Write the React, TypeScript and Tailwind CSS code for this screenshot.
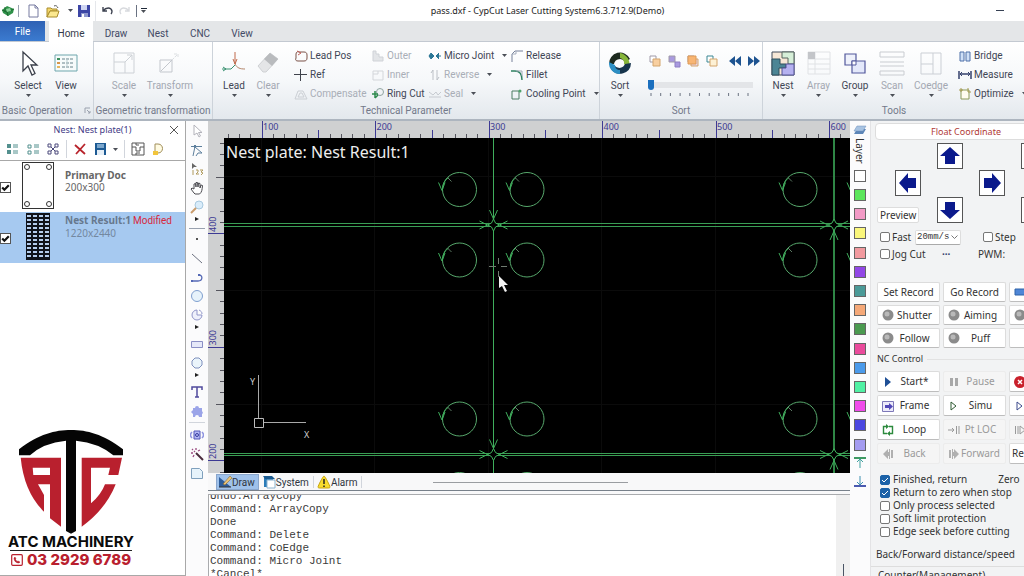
import { useState } from 'react';
import type { ReactNode } from 'react';

const GREEN = '#3fae5c';

function Caret({ className = '' }: { className?: string }) {
  return (
    <svg width="5" height="3" viewBox="0 0 5 3" className={`shrink-0 ${className}`}>
      <path d="M0 0h5L2.5 3z" fill="#4b4f57" />
    </svg>
  );
}

function Icon({ size = 14, children }: { size?: number; children: ReactNode }) {
  return (
    <svg width={size} height={size} viewBox={`0 0 ${size} ${size}`} fill="none" className="shrink-0">
      {children}
    </svg>
  );
}

/* ---------- title bar ---------- */

function TitleBar() {
  return (
    <header className="flex h-[21px] shrink-0 items-center bg-white">
      <div className="flex w-[150px] shrink-0 items-center pl-px">
        <Icon size={14}>
          <path d="M1 6 L6 2 L13 5 L12 9 L7 12 L2 9z" fill="#2f9149" />
          <path d="M1 6l5 2 1 4M6 8l7-3M4 3v5" stroke="#1c6a31" />
          <path d="M5 5l4-1 1 3-4 1z" fill="#8bd29b" />
        </Icon>
        <span className="mx-[3px] h-3 w-px bg-gray-400" />
        <button aria-label="New" className="mr-1.5 ml-1">
          <Icon size={14}>
            <path d="M3 1h6l3 3v9H3z" fill="#fff" stroke="#777aa0" />
            <path d="M9 1v3h3" stroke="#777aa0" />
          </Icon>
        </button>
        <button aria-label="Open" className="flex items-center gap-2">
          <Icon size={14}>
            <path d="M1 4h4l1 1h5v2H4l-3 6z" fill="#f3d66b" stroke="#a98c2c" />
            <path d="M4 7h9l-2 6H1z" fill="#fbe88f" stroke="#a98c2c" />
            <path d="M8 2c2-1 3 0 4 2" stroke="#555" />
          </Icon>
          <Caret />
        </button>
        <button aria-label="Save" className="ml-1">
          <Icon size={14}>
            <path d="M1 1h12v12H1z" fill="#3c45a5" />
            <path d="M4 1h6v5H4z" fill="#cfd5f2" />
            <path d="M4 9h7v4H4z" fill="#8f98cf" />
            <path d="M5 10h2v3H5z" fill="#fff" />
          </Icon>
        </button>
        <span className="mx-1 h-5 w-px bg-gray-200" />
        <button aria-label="Undo">
          <Icon size={14}>
            <path d="M3 3v4h4M3 7c3-4 8-4 9 0 0 1 0 2-1 3" stroke="#3d4250" strokeWidth="1.4" />
          </Icon>
        </button>
        <button aria-label="Redo" className="ml-1">
          <Icon size={14}>
            <path d="M11 3v4H7M11 7c-3-4-8-4-9 0 0 1 0 2 1 3" stroke="#d8dade" strokeWidth="1.4" />
          </Icon>
        </button>
        <span className="ml-1 h-3 w-px bg-gray-500" />
        <button aria-label="Customize" className="ml-1 w-1.5 border-t border-gray-800 pt-px">
          <Caret />
        </button>
      </div>
      <h1 className="flex-1 text-center text-[9px] text-[#222]">pass.dxf - CypCut Laser Cutting System6.3.712.9(Demo)</h1>
      <div className="flex w-[79px] shrink-0 justify-end pr-5">
        <button aria-label="Minimize" className="flex h-4 items-center">
          <span className="h-px w-2 bg-gray-700" />
        </button>
      </div>
    </header>
  );
}

/* ---------- ribbon ---------- */

const tabs = ['Home', 'Draw', 'Nest', 'CNC', 'View'];

function RibbonTabs() {
  const [active, setActive] = useState('Home');
  return (
    <nav className="flex h-[21px] shrink-0 items-stretch border-b border-[#c3c9d1] bg-[#e4e6e8] font-[Roboto] text-[10px]">
      <button className="mr-1 w-[45px] bg-gradient-to-b from-[#2f62b4] to-[#3b7bd0] text-white">File</button>
      {tabs.map((tab) => (
        <button
          key={tab}
          onClick={() => setActive(tab)}
          className={`pt-1 ${tab === active ? 'mr-0.5 -mb-px w-11 bg-white text-[#333a4a]' : 'w-[42px] text-[#434a66]'}`}
        >
          {tab}
        </button>
      ))}
    </nav>
  );
}

function Group({ label, className, launcher, children }: { label: string; className: string; launcher?: boolean; children: ReactNode }) {
  return (
    <section className={`flex shrink-0 flex-col border-r border-[#cdd3da] ${className}`}>
      <div className="flex flex-1 pt-1">{children}</div>
      <div className="flex h-4 items-center justify-center gap-3 pb-px whitespace-nowrap text-[#73798a]">
        {label}
        {launcher && (
          <Icon size={7}>
            <path d="M1 6V1h5M3 3l3 3M6 4v2H4" stroke="#9aa1ae" />
          </Icon>
        )}
      </div>
    </section>
  );
}

function BigButton({ label, className, disabled, children }: { label: string; className: string; disabled?: boolean; children: ReactNode }) {
  return (
    <button disabled={disabled} className={`flex shrink-0 flex-col items-center pt-1 ${disabled ? 'text-[#a3a8b2]' : 'text-[#3f4655]'} ${className}`}>
      <Icon size={26}>{children}</Icon>
      <span className="mt-1 leading-3">{label}</span>
      <Caret className="mt-0.5" />
    </button>
  );
}

function SmallButton({ label, disabled, caret, children }: { label: string; disabled?: boolean; caret?: boolean; children: ReactNode }) {
  return (
    <button disabled={disabled} className={`flex h-[19px] items-center gap-0.5 whitespace-nowrap ${disabled ? 'text-[#a9aeb7]' : 'text-[#3f4655]'}`}>
      <Icon size={14}>{children}</Icon>
      {label}
      {caret && <Caret className="ml-1.5" />}
    </button>
  );
}

const sortIcons = [
  ['#fff', '#f8cfa0'],
  ['#a99adf', '#a99adf'],
  ['#f8b573', '#e8d5e8'],
  ['#fff', '#fdf1d5'],
];

function Ribbon() {
  return (
    <div className="flex h-[79px] shrink-0 overflow-hidden border-b-2 border-[#adb5bf] bg-gradient-to-b from-white via-[#f6f8fa] to-[#e3e8ed] font-[Roboto] text-[10px]">
      <Group label="Basic Operation" className="w-[94px]" launcher>
        <BigButton label="Select" className="ml-2 w-10">
          <path d="M8 2v19l5-5 4 9 3-1.500-4-8.500h6z" fill="#fff" stroke="#3a3f4a" strokeWidth="1.300" />
        </BigButton>
        <BigButton label="View" className="w-9">
          <path d="M2 5h22v16H2z" fill="#f6fbfb" stroke="#6fa6ad" />
          <path d="M4 8h3v2H4z" fill="#3a8f5c" />
          <path d="M4 12h3v2H4z" fill="#d8964a" />
          <path d="M4 16h3v2H4z" fill="#e5b75f" />
          <path d="M9 9h12M9 13h12M9 17h12" stroke="#67828a" strokeDasharray="3 1" />
          <path d="M14 9v9" stroke="#b9cdd0" />
        </BigButton>
      </Group>
      <Group label="Geometric transformation" className="w-[119px]">
        <BigButton label="Scale" className="ml-2 w-11" disabled>
          <path d="M3 3h20v20H3z" stroke="#cdd1d6" />
          <path d="M3 12h11v11M14 12l7-7M16 5h5v5" stroke="#cdd1d6" />
        </BigButton>
        <BigButton label="Transform" className="w-12" disabled>
          <path d="M3 10h12v12H3z" stroke="#c3c7cd" />
          <path d="M4 21L15 10" stroke="#c3c7cd" />
          <path d="M15 10l5-5M17 4h4v4" stroke="#dcdfe2" strokeDasharray="3 1" />
        </BigButton>
      </Group>

      <Group label="Technical Parameter" className="w-[387px]">
        <BigButton label="Lead" className="ml-[3px] w-9">
          <path d="M14 2v12M12 9l2 5 2-5" stroke="#c0694a" />
          <path d="M1 19h9l4-4" stroke="#37906f" />
          <path d="M2 17l3 2-3 2" stroke="#37906f" />
          <path d="M14 14c2 4 5 5 10 5" stroke="#b38468" />
        </BigButton>
        <BigButton label="Clear" className="w-8" disabled>
          <path d="M3 16L15 3l8 6-12 13H8z" fill="#e4e5e7" stroke="#cfd1d4" />
          <path d="M9 9L15 3l8 6-6 7z" fill="#b9bbbe" />
        </BigButton>
        <div className="mt-1 mr-1.5 ml-1 h-12 w-px bg-[#d6dbe1]" />
        <div className="grid grid-flow-col grid-cols-[77px_57px_82px_90px] grid-rows-3 content-start">
          <SmallButton label="Lead Pos">
            <path d="M2 5c0-2 2-3 3-2h5c2 0 3 1 3 3v3c0 2-1 3-3 3H4c-2 0-3-1-2-3z" stroke="#7b5248" />
            <path d="M3 2l4 2-3 2" stroke="#c0605a" />
          </SmallButton>
          <SmallButton label="Ref">
            <path d="M6.500 1v12M0 6.500h13" stroke="#3f434c" />
          </SmallButton>
          <SmallButton label="Compensate" disabled>
            <path d="M1 12L4 4h5l4 8zM4 10l2-4h2l2 4z" stroke="#cbcfd4" />
          </SmallButton>
          <SmallButton label="Outer" disabled>
            <path d="M2 12V2h3v3h3v3h4v4z" fill="#e3e5e8" stroke="#cfd2d7" />
          </SmallButton>
          <SmallButton label="Inner" disabled>
            <path d="M2 3h10v9H2zM2 6h5V3" stroke="#d3d6da" />
          </SmallButton>
          <SmallButton label="Ring Cut">
            <circle cx="9" cy="5" r="3.500" stroke="#8fa4a0" />
            <path d="M1 7h6M4 4v7M4 11l3-3" stroke="#2d8a4c" strokeWidth="1.500" />
          </SmallButton>
          <SmallButton label="Micro Joint" caret>
            <path d="M1 7h5M8 7h5" stroke="#2c7796" />
            <path d="M3 4l3 3-3 3-2-3zM11 4L8 7l3 3" fill="#2c7796" stroke="#2c7796" />
          </SmallButton>
          <SmallButton label="Reverse" disabled caret>
            <path d="M5 12V2L3 5M9 2v10l2-3" stroke="#bcc0c6" />
          </SmallButton>
          <SmallButton label="Seal" disabled caret>
            <path d="M1 10h12M1 5l4 3 3-3M8 5l2 3 3-3" stroke="#c6cad0" />
          </SmallButton>
          <SmallButton label="Release">
            <path d="M2 13V5l3-3h8" stroke="#76819a" />
            <path d="M2 5h4V2" stroke="#a5adbd" />
          </SmallButton>
          <SmallButton label="Fillet">
            <path d="M1 3h4c5 0 7 3 7 9" stroke="#2e8060" strokeWidth="1.400" />
            <path d="M6 3h6v5" stroke="#a0a8b5" />
          </SmallButton>
          <SmallButton label="Cooling Point" caret>
            <path d="M2 4h7v8H2z" stroke="#4d7d62" />
            <circle cx="10" cy="4" r="1.500" fill="#4fa36a" />
          </SmallButton>
        </div>
      </Group>

      <Group label="Sort" className="w-[163px]">
        <BigButton label="Sort" className="ml-0.5 w-9">
          <path d="M2 14A11 11 0 0 1 23 9l-5 3a6 6 0 0 0-11 2z" fill="#1d2a1f" />
          <path d="M13 3a11 11 0 0 1 9 14l-5-3a5 5 0 0 0-4-6z" fill="#86b53a" />
          <path d="M24 13A11 11 0 0 1 4 19l4-3a6 6 0 0 0 10-2z" fill="#16344c" />
          <path d="M2 12l6 3c0 3 2 5 5 5v4A11 11 0 0 1 2 12z" fill="#2c8fc4" />
        </BigButton>
        <div className="ml-2.5 flex flex-col">
          <div className="flex h-[22px] items-end gap-[5px]">
            {sortIcons.map(([back, front], i) => (
              <button key={i} aria-label={`Sort order ${i + 1}`}>
                <Icon size={14}>
                  <path d="M2 2h6v6H2z" fill={back} stroke={i === 3 ? '#3b8793' : '#a09aa8'} />
                  <path d={i === 1 ? 'M8 8h5v5H8z' : 'M5 5h7v7H5z'} fill={front} stroke={i === 1 ? '#8d7fc4' : '#d3a56d'} />
                  {i === 2 && <path d="M2 2h8v8H2z" fill="#f8b573" stroke="#dd9b58" />}
                </Icon>
              </button>
            ))}
            <button aria-label="Previous" className="ml-1">
              <Icon size={14}>
                <path d="M7 2v10L1 7zM13 2v10L7 7z" fill="#1d5390" />
              </Icon>
            </button>
            <button aria-label="Next">
              <Icon size={14}>
                <path d="M1 2v10l6-5zM7 2v10l6-5z" fill="#1d5390" />
              </Icon>
            </button>
          </div>
          <input
            type="range"
            aria-label="Sort position"
            min={0}
            max={10}
            defaultValue={0}
            className="mt-3 h-[10px] w-[105px] appearance-none bg-[linear-gradient(#e3e5e8,#e3e5e8)] bg-[length:100%_6px] bg-center bg-no-repeat [&::-webkit-slider-thumb]:h-[10px] [&::-webkit-slider-thumb]:w-[6px] [&::-webkit-slider-thumb]:appearance-none [&::-webkit-slider-thumb]:rounded-b-sm [&::-webkit-slider-thumb]:bg-[#1b6fbe]"
          />
          <svg width="105" height="6" className="mt-0.5">
            {Array.from({ length: 11 }, (_, i) => (
              <path key={i} d={`M${3 + i * 9.7} 1v3`} stroke="#6b7280" />
            ))}
          </svg>
        </div>
      </Group>

      <Group label="Tools" className="min-w-[262px] flex-1 border-r-0">
        <BigButton label="Nest" className="ml-0.5 w-9">
          <path d="M2 2h22v23H2z" fill="#f6e7d6" stroke="#3f4a5a" />
          <path d="M12 2h12v12h-6V8h-6z" fill="#d6efd8" stroke="#56645f" />
          <path d="M2 9h8v5h6v4H9v7H2z" fill="#4b8595" stroke="#2f4f5c" />
          <path d="M16 14h8v11H12v-7h4z" fill="#b5b1f0" stroke="#535296" />
        </BigButton>
        <BigButton label="Array" className="w-[35px]" disabled>
          <path d="M2 2h22v22H2zM2 9h22M2 14h22M2 19h22M9 2v22" stroke="#e0e2e5" />
          <path d="M2 2h7v7H2z" fill="#c3c5c9" />
        </BigButton>
        <BigButton label="Group" className="w-[38px]">
          <path d="M3 4h11v11H3z" fill="#eef1fb" stroke="#52589c" strokeWidth="1.200" />
          <path d="M10 11h13v12H10z" fill="#e3e8fa" stroke="#52589c" strokeWidth="1.200" />
          <path d="M10 11h4v4h-4z" fill="#fff" stroke="#52589c" />
        </BigButton>
        <BigButton label="Scan" className="w-9" disabled>
          <path d="M1 2h24v5H1zM1 12h24M1 16h24M1 21h24v4H1z" stroke="#c9ccd1" />
        </BigButton>
        <BigButton label="Coedge" className="w-[42px]" disabled>
          <path d="M3 3h20v21H3zM3 14h12M15 3v21" stroke="#cbcfd5" />
        </BigButton>
        <div className="ml-1.5 flex flex-col">
          <SmallButton label="Bridge">
            <path d="M2 3h4v9H2zM8 3h4v9H8z" fill="#cfe0f7" stroke="#4e70a8" />
          </SmallButton>
          <SmallButton label="Measure">
            <path d="M1 3v8M13 3v8M2 6h10" stroke="#35406c" strokeWidth="1.500" />
            <path d="M4 4L2 6l2 2M10 4l2 2-2 2" stroke="#35406c" />
          </SmallButton>
          <SmallButton label="Optimize" caret>
            <path d="M3 3h8v9H3z" stroke="#8b9a5a" fill="#fffdf0" />
            <path d="M10 1v4h3M2 2h2v2H2z" stroke="#a49a4e" />
          </SmallButton>
        </div>
      </Group>
    </div>
  );
}

/* ---------- nest panel ---------- */

function PlateThumb() {
  return (
    <svg width="34" height="50" className="shrink-0">
      <rect x="1.500" y="1.500" width="31" height="46" fill="#fff" stroke="#333" />
      {[[6, 6], [28, 6], [6, 43], [28, 43]].map(([x, y]) => (
        <circle key={`${x}-${y}`} cx={x} cy={y} r="2.500" fill="none" stroke="#333" />
      ))}
    </svg>
  );
}

function NestThumb() {
  return (
    <svg width="34" height="50" className="shrink-0">
      <rect x="5" y="1" width="24" height="47" fill="#10131a" />
      {Array.from({ length: 11 }, (_, row) =>
        [6, 12, 18, 24].map((x) => <rect key={`${row}-${x}`} x={x} y={3 + row * 4} width="4" height="2" fill="#b5cdec" />),
      )}
    </svg>
  );
}

function NestRow({ id, name, size, selected, modified, thumb }: { id: string; name: string; size: string; selected?: boolean; modified?: boolean; thumb: ReactNode }) {
  return (
    <li className={`flex h-[51px] items-start ${selected ? 'bg-[#a6c9f0]' : 'bg-white'}`}>
      <span className="flex h-full items-center pt-0.5">
        <CheckBox id={id} black defaultChecked />
      </span>
      <span className="ml-2.5">{thumb}</span>
      <label htmlFor={id} className={`ml-2.5 text-[10px] leading-3 whitespace-nowrap ${modified ? 'pt-0.5' : 'pt-2'}`}>
        <span className={`font-bold ${selected ? 'text-[#66788e]' : 'text-[#666]'}`}>{name}</span>
        {modified && <span className="ml-0.5 font-[Roboto] text-[#d8283c]">Modified</span>}
        <span className={`block ${selected ? 'text-[#7488a0]' : 'text-[#666]'}`}>{size}</span>
      </label>
    </li>
  );
}

function CheckBox({ id, black, defaultChecked }: { id: string; black?: boolean; defaultChecked?: boolean }) {
  return (
    <span className="relative flex shrink-0">
      <input
        id={id}
        type="checkbox"
        defaultChecked={defaultChecked}
        className={`peer appearance-none border bg-white ${
          black ? 'size-[11px] border-[#555]' : 'size-[10px] rounded-xs border-[#777] checked:border-[#1c62a8] checked:bg-[#1c62a8]'
        }`}
      />
      <svg viewBox="0 0 10 10" className="pointer-events-none absolute inset-0 hidden size-full peer-checked:block">
        <path d="M2 5l2 2 4-4" fill="none" stroke={black ? '#111' : '#fff'} strokeWidth={black ? 2 : 1} />
      </svg>
    </span>
  );
}

function Logo() {
  return (
    <div className="mt-auto flex w-[142px] flex-col items-center pb-1.5">
      <svg width="104" height="105" viewBox="0 0 104 105">
        <path d="M0 20.300C20 5 36 1 52 1s32 4 52 19.300v6H94.300Q80 14 57 11.700V102l-5 2.700-5-2.700V11.700Q24 14 11 26.300H0z" fill="#050505" />
        <path
          fillRule="evenodd"
          d="M1.700 28.700H42v69l-11-8.400v-34H19L25 66v16.700Q5 63 1.700 28.700zM13.700 38.700l.6 7.300H31v-7.300z"
          fill="#b9202e"
        />
        <path d="M62.700 28.700H103L99.300 46h-10l1.700-7.300H72v35.600Q82 66 86 55.300h10.700Q87 80 62.700 97.700z" fill="#b9202e" />
      </svg>
      <p className="font-[Inter] text-[15px] leading-4 font-bold whitespace-nowrap text-[#0b0b0b]">ATC MACHINERY</p>
      <div className="h-px w-[122px] bg-[#222]" />
      <p className="flex items-center gap-1 font-[Inter] text-[15px] leading-[18px] font-extrabold whitespace-nowrap text-[#b9202e]">
        <svg width="12" height="12" viewBox="0 0 12 12" fill="none" stroke="#b9202e">
          <rect x=".7" y=".7" width="10.600" height="10.600" rx="1" strokeWidth="1.200" />
          <path d="M4 3L3 4c0 3 2 5 5 5l1-1-2-1-1 .500L4.500 5.500 5 5z" fill="#b9202e" strokeWidth=".5" />
        </svg>
        03 2929 6789
      </p>
    </div>
  );
}

function NestPanel() {
  return (
    <aside className="flex w-[186px] shrink-0 flex-col border-r border-b border-[#a8a8a8] bg-white">
      <div className="flex h-[17px] shrink-0 items-center">
        <h2 className="flex-1 pl-[18px] text-center text-[9px] text-[#3f3a86]">Nest: Nest plate(1)</h2>
        <button aria-label="Close" className="mr-1">
          <Icon size={14}>
            <path d="M3 3l8 8M11 3l-8 8" stroke="#555" />
          </Icon>
        </button>
      </div>
      <div className="flex h-[22px] shrink-0 items-center gap-1.5 pl-1.5">
        <button aria-label="Show all">
          <Icon size={14}>
            <path d="M1 2h4v4H1zM1 8h4v4H1z" fill="#53908e" />
            <path d="M7 3h5M7 5h5M7 9h5M7 11h5" stroke="#53908e" />
          </Icon>
        </button>
        <button aria-label="Show parts">
          <Icon size={14}>
            <path d="M2 3h3v3H2zM2 9h3v3H2z" stroke="#53908e" />
            <path d="M8 3h5M8 5h5M8 9h5M8 11h5" stroke="#53908e" />
          </Icon>
        </button>
        <button aria-label="Show nests">
          <Icon size={14}>
            <path d="M2 2h3v3H2zM9 9h3v3H9zM2 9h3v3H2zM9 2h3v3H9z" stroke="#4c4a7c" />
            <path d="M5 5l4 4M9 5L5 9" stroke="#4c4a7c" />
          </Icon>
        </button>
        <span className="h-[18px] w-px bg-gray-300" />
        <button aria-label="Delete">
          <Icon size={14}>
            <path d="M2 3l10 9M12 2L3 12" stroke="#b8242c" strokeWidth="1.800" />
          </Icon>
        </button>
        <button aria-label="Save nest" className="flex items-center gap-1.5">
          <Icon size={14}>
            <path d="M2 1h11v12H2z" fill="#1d5a93" />
            <path d="M4 2h7v4H4z" fill="#7ba6cc" />
            <path d="M4 8h7v5H4z" fill="#e6eff7" />
          </Icon>
          <Caret />
        </button>
        <span className="h-[18px] w-px bg-gray-300" />
        <button aria-label="Nest parts">
          <Icon size={14}>
            <path d="M1 1h12v12H1zM1 5h4v4h4V5h4M5 1v2h3M5 13v-2h4" stroke="#555" />
          </Icon>
        </button>
        <button aria-label="Report">
          <Icon size={14}>
            <path d="M4 2h3c6 0 6 9 0 9H4z" fill="#fffbe2" stroke="#a18f5b" />
            <path d="M2 9h5v4H2z" fill="#f2c53c" />
          </Icon>
        </button>
      </div>
      <ul className="shrink-0 border-t border-[#a8a8a8]">
        <NestRow id="doc-primary" name="Primary Doc" size="200x300" thumb={<PlateThumb />} />
        <NestRow id="doc-nest" name="Nest Result:1" size="1220x2440" selected modified thumb={<NestThumb />} />
      </ul>
      <Logo />
    </aside>
  );
}

/* ---------- drawing tools ---------- */

function Tool({ label, children }: { label: string; children: ReactNode }) {
  return (
    <button aria-label={label} className="flex h-[19px] shrink-0 items-center">
      <Icon size={14}>{children}</Icon>
    </button>
  );
}

function ToolMore() {
  return (
    <svg width="4" height="6" viewBox="0 0 4 6" className="mb-1 shrink-0">
      <path d="M0 1l4 2-4 2z" fill="#222" />
    </svg>
  );
}

function ToolBox() {
  return (
    <div className="flex w-[22px] shrink-0 flex-col items-center bg-[#fbfbfc]">
      <Tool label="Select">
        <path d="M4 1v10l3-2 2 4 1.500-1-2-3.500H12z" stroke="#b3b3bb" fill="#fff" />
      </Tool>
      <Tool label="Edit node">
        <path d="M1 3.500h11M5 3.500L3 13M5 4l7 6H8l-2 3" stroke="#5d7f9c" />
        <path d="M4 2h2v3H4z" fill="#5d7f9c" />
      </Tool>
      <Tool label="Sequence">
        <path d="M2 1v6l2-2h3z" fill="#666" />
        <path d="M3 8v5M6 8h2v2L6 12h3M10 8h3l-2 2 2 1-2 2" stroke="#b09a5c" />
      </Tool>
      <Tool label="Pan">
        <path d="M4 12L1 8l1-1 2 1V3l1.500-.500L6 6V1.500h1.500L8 6l.500-4 1.500.5V7l1-3 1.500.5C12 9 12 11 9.500 13H5z" stroke="#4a4a50" fill="#fff" />
      </Tool>
      <Tool label="Zoom">
        <circle cx="9" cy="5" r="4" fill="#d9ecfa" stroke="#a7c8df" />
        <path d="M6 8l-5 5" stroke="#c99b6c" strokeWidth="2" />
      </Tool>
      <ToolMore />
      <div className="mt-0.5 h-px w-4 shrink-0 bg-gray-400" />
      <Tool label="Point">
        <path d="M6 6h2v2H6z" fill="#555" />
      </Tool>
      <Tool label="Line">
        <path d="M2 3l10 9" stroke="#6e7280" />
      </Tool>
      <Tool label="Polyline">
        <path d="M2 11h6c5 0 5-6 1-6" stroke="#5468b5" strokeWidth="1.300" />
        <path d="M1 10h2v2H1zM8 4h2v2H8z" fill="#5468b5" />
      </Tool>
      <Tool label="Circle">
        <circle cx="7" cy="7" r="5.500" fill="#e6f2fb" stroke="#7f9fcf" />
      </Tool>
      <Tool label="Arc">
        <path d="M7 7V2a5 5 0 1 0 5 5z" fill="#eef0fb" stroke="#9095c9" />
        <path d="M9 2c2 1 3 2 3 4" stroke="#9095c9" />
      </Tool>
      <ToolMore />
      <Tool label="Rectangle">
        <path d="M1.500 4.500h11v6h-11z" fill="#e5e8f8" stroke="#8a8fc5" />
      </Tool>
      <Tool label="Polygon">
        <path d="M5 2h4l3 3v4l-3 3H5L2 9V5z" fill="#eaf4fb" stroke="#7f90bd" />
      </Tool>
      <ToolMore />
      <Tool label="Text">
        <path d="M2 5V2h10v3M7 2v10M5 12h4" stroke="#504a9c" strokeWidth="1.500" />
      </Tool>
      <Tool label="Part library">
        <path d="M5 4a2 2 0 1 1 4 0h3v3l1 2-1 1v3H9a2 2 0 0 0-4 0H3v-3L1 8l2-2V4z" fill="#9ba4e8" />
      </Tool>
      <div className="my-0.5 h-px w-4 shrink-0 bg-gray-300" />
      <Tool label="Array">
        <path d="M4 3h6v8H4z" fill="#b4b8f5" stroke="#5257b8" />
        <path d="M2 4c-2 2-2 4 0 6M12 4c2 2 2 4 0 6" stroke="#8f94e0" strokeWidth="1.500" />
        <circle cx="7" cy="7" r="1.500" stroke="#363b9c" />
      </Tool>
      <Tool label="Magic wand">
        <path d="M6 6l7 7" stroke="#4a2b3d" strokeWidth="2" />
        <path d="M2 2l1 1M6 1v2M1 6h2M8 4l2-1M4 8l-1 2M4 4l1 1" stroke="#9a4a80" strokeWidth="1.300" />
      </Tool>
      <Tool label="Chamfer">
        <path d="M1.500 2.500h8l3 3v7h-11z" fill="#e6f3fb" stroke="#7fa0bd" />
      </Tool>
    </div>
  );
}

/* ---------- drawing area ---------- */

const STEP = 11.35;

function HRuler() {
  return (
    <svg className="block h-[17px] w-full shrink-0 bg-[#cfd0d1]" fontSize="9">
      {Array.from({ length: 180 }, (_, i) => {
        const n = 70 + i * 10;
        const x = Math.round(3.5 + i * STEP) + 0.5;
        const len = n % 100 === 0 ? 17 : n % 50 === 0 ? 8 : 4;
        return <path key={n} d={`M${x} ${17 - len}v${len}`} stroke={n % 50 === 0 ? '#3d3a94' : '#55555e'} />;
      })}
      {[100, 200, 300, 400, 500, 600].map((n, i) => (
        <text key={n} x={39 + i * 10 * STEP} y="9" fill="#3d3a94">
          {n}
        </text>
      ))}
    </svg>
  );
}

function VRuler() {
  return (
    <svg className="block w-4 shrink-0 bg-[#cfd0d1]" fontSize="9">
      {Array.from({ length: 120 }, (_, i) => {
        const n = 480 - i * 10;
        const y = Math.round(4.5 + i * STEP) + 0.5;
        const len = n % 100 === 0 ? 16 : n % 50 === 0 ? 8 : 4;
        return <path key={n} d={`M${16 - len} ${y}h${len}`} stroke={n % 100 === 0 ? '#3d3a94' : '#55555e'} />;
      })}
      {[400, 300, 200].map((n, i) => (
        <text key={n} transform={`translate(8 ${94 + i * 10 * STEP}) rotate(-90)`} fill="#3d3a94">
          {n}
        </text>
      ))}
    </svg>
  );
}

function Hole({ x, y }: { x: number; y: number }) {
  return (
    <g transform={`translate(${x} ${y})`}>
      <circle r="17" stroke="#57a86c" />
      <path d="M-21 -7l3.500 8 3-8M-17 0c0-5 2-9 6-12" stroke={GREEN} />
      <path d="M-12 -12l4 4" stroke="#5c7a64" />
    </g>
  );
}

function Junction({ x, y, up }: { x: number; y: number; up?: boolean }) {
  return (
    <g transform={`translate(${x} ${y})`} stroke={GREEN}>
      <path d="M0 -6Q-1 -1-6 0Q-1 1 0 6Q1 1 6 0Q1 -1 0 -6z" fill="#000" />
      <path d="M-14 -4l8 4-8 4M14 -4l-8 4 8 4" />
      <path d={up ? 'M-4 15L0 6l4 9' : 'M-4 -15L0 -6l4 -9'} />
    </g>
  );
}

function Canvas() {
  return (
    <svg className="block min-w-0 flex-1 bg-black" fill="none">
      <path d="M37.500 0v2000M150.500 0v2000M264.500 0v2000M377.500 0v2000M491.500 0v2000M0 38.500h3000M0 152.500h3000M0 266.500h3000" stroke="#0b0b0b" />
      <path d="M269.500 0v2000" stroke={GREEN} />
      <path d="M610 0v2000" stroke="#2f8646" strokeWidth="2" />
      <path d="M0 85.500h3000M0 88.500h3000M0 315.500h3000M0 317.500h3000" stroke="#3a9e54" />
      {[51.5, 122, 281, 351.5].map((y) => [235.5, 303, 576, 644].map((x) => <Hole key={`${x}-${y}`} x={x} y={y} />))}
      <Junction x={269.5} y={87} />
      <Junction x={269.5} y={316.5} />
      <Junction x={610} y={87} up />
      <Junction x={610} y={316.5} up />
      <path d="M34.500 237v43M39 284.500h43" stroke="#a9a9a9" />
      <path d="M30.500 280.500h9v9h-9z" stroke="#bdbdbd" />
      <text x="26" y="247" fontSize="9" fill="#cfcfcf">Y</text>
      <text x="80" y="300" fontSize="9" fill="#cfcfcf">X</text>
      <path d="M274.500 120v6M274.500 133v6M265 128.500h7M277 128.500h6" stroke="#6f7a70" />
      <path d="M275 138v12l3-2 3 6 2-1-3-6h4z" fill="#f2f2f2" />
      <text x="2" y="20" fontSize="16" fill="#ededed">Nest plate: Nest Result:1</text>
    </svg>
  );
}

const logLines = ['Undo:ArrayCopy', 'Command: ArrayCopy', 'Done', 'Command: Delete', 'Command: CoEdge', 'Command: Micro Joint', '*Cancel*'];

function Workspace() {
  return (
    <main className="flex min-w-0 flex-1 flex-col bg-[#f8f8f9]">
      <div className="flex shrink-0 bg-[#cfd0d1] pl-4">
        <HRuler />
      </div>
      <div className="flex min-h-0 flex-1">
        <VRuler />
        <Canvas />
      </div>
      <div className="flex h-[18px] shrink-0 items-stretch border-b border-[#77808a] pt-px pl-2 font-[Roboto] text-[10px] text-[#2f3540]">
        <button className="flex items-center border border-[#8aa6cc] bg-[#9fc1ea] pr-[3px] pl-px">
          <Icon size={14}>
            <path d="M1 2v10h12z" fill="#2c5c9a" />
            <path d="M5 9l7-8 2 2-7 7z" fill="#e9c275" stroke="#7a5a25" strokeWidth=".5" />
            <path d="M1 12h12" stroke="#333" />
          </Icon>
          Draw
        </button>
        <button className="my-0.5 flex items-center border-r border-gray-300 pr-1 pl-[3px]">
          <Icon size={14}>
            <path d="M2 2h9v10H2z" fill="#2a7bb8" />
            <path d="M5 5h8v8H5z" fill="#fff" stroke="#8ab2cf" />
            <path d="M1 1h9l3 3H3z" fill="#1b5b90" />
          </Icon>
          System
        </button>
        <button className="my-0.5 flex items-center border-r border-gray-300 pr-1 pl-[3px]">
          <Icon size={14}>
            <path d="M7 1c1 0 6 10 6 11s-1 1-2 1H3c-1 0-2 0-2-1S6 1 7 1z" fill="#f7dc2e" stroke="#c7a40f" />
            <path d="M7 4v5M7 10.500v1.500" stroke="#222" strokeWidth="1.500" />
          </Icon>
          Alarm
        </button>
        <div className="mr-[222px] ml-auto h-px w-[195px] self-center bg-[#9a9da1]" />
      </div>
      <div className="mt-[3px] flex h-[82px] shrink-0 overflow-hidden border-t border-l border-[#a9abae] bg-white">
        <div className="flex-1 overflow-hidden">
          <ul className="-mt-[5px] pl-px font-['Liberation_Mono',monospace] text-[11px] leading-[13px] text-[#3c3c3c]">
            {logLines.map((line) => (
              <li key={line}>{line}</li>
            ))}
          </ul>
        </div>
        <div className="flex w-3.5 flex-col items-center justify-end bg-[#f0f0f0]">
          <div className="h-3 w-px bg-gray-600" />
        </div>
      </div>
    </main>
  );
}

/* ---------- layers ---------- */

const layers = [
  'bg-white', 'bg-[#5ce65c]', 'bg-[#f29ac6]', 'bg-[#fbf77c]', 'bg-[#f29a9f]', 'bg-[#9247e6]', 'bg-[#4b9a98]', 'bg-[#f5a878]',
  'bg-[#4b9a50]', 'bg-[#ea4b9c]', 'bg-[#4b9aea]', 'bg-[#50f0a4]', 'bg-[#f04bea]', 'bg-[#4b47e0]', 'bg-[#a49cf0]',
];

function LayerStrip() {
  return (
    <div className="flex w-5 shrink-0 flex-col items-center bg-[#fbfbfc] pt-[3px]">
      <Icon size={14}>
        <path d="M4 5h9l-3 5H1z" fill="#5d86b8" />
        <path d="M4 2h9l-3 5H1z" fill="#a8c3e2" stroke="#6d8fba" strokeWidth=".5" />
      </Icon>
      <span className="mb-1.5 text-[10px] leading-3 text-[#333] [writing-mode:vertical-rl]">Layer</span>
      <div className="flex h-[281px] shrink-0 flex-col justify-between">
        {layers.map((color, i) => (
          <button key={color} aria-label={`Layer ${i}`} className={`size-3 border border-[#666] ${color}`} />
        ))}
      </div>
      <button aria-label="Move to first" className="mt-1.5">
        <Icon size={12}>
          <path d="M0 1h12" stroke="#3e9a62" strokeWidth="2" />
          <path d="M6 2v9M3 5l3-3 3 3" stroke="#3fa0a0" />
        </Icon>
      </button>
      <button aria-label="Move to last" className="mt-1.5">
        <Icon size={12}>
          <path d="M0 11h12" stroke="#4a5ab0" strokeWidth="2" />
          <path d="M6 1v9M3 7l3 3 3-3" stroke="#3f90b0" />
        </Icon>
      </button>
    </div>
  );
}

/* ---------- control panel ---------- */

function ArrowButton({ label, turn, className = '' }: { label: string; turn: string; className?: string }) {
  return (
    <button aria-label={label} className={`flex size-[26px] items-center justify-center border border-[#555] bg-white ${className}`}>
      <svg width="22" height="22" viewBox="0 0 22 22" className={turn}>
        <path d="M11 2l10 9h-5v8H6v-8H1z" fill="#0b1a8c" />
      </svg>
    </button>
  );
}

function PanelButton({ label, disabled, children }: { label: string; disabled?: boolean; children?: ReactNode }) {
  return (
    <button
      disabled={disabled}
      className={`flex items-center rounded-xs border px-1 whitespace-nowrap ${
        disabled ? 'border-[#ececec] bg-[#f5f5f5] text-[#9a9a9a]' : 'border-[#dcdcdc] border-b-[#bdbdbd] bg-white text-[#333]'
      }`}
    >
      {children}
      {label && <span className="flex-1 text-center">{label}</span>}
    </button>
  );
}

function Lamp() {
  return (
    <Icon size={12}>
      <circle cx="6" cy="6" r="5.500" fill="#8b8b8b" />
      <circle cx="5" cy="5" r="2.500" fill="#b9b9b9" />
    </Icon>
  );
}

const options = [
  { label: 'Finished, return', on: true, value: 'Zero' },
  { label: 'Return to zero when stop', on: true },
  { label: 'Only process selected' },
  { label: 'Soft limit protection' },
  { label: 'Edge seek before cutting' },
];

function ControlPanel() {
  return (
    <aside className="w-[154px] shrink-0 overflow-hidden border-l border-[#e3e3e5] bg-[#f2f3f4] text-[10px] text-[#333]">
      <div className="flex w-[201px] flex-col pt-[2px]">
        <h2 className="ml-1 flex h-[17px] w-[182px] items-center justify-center rounded-sm border border-[#ddd] bg-white text-[9px] leading-3 text-[#b13a36]">
          Float Coordinate
        </h2>
        <div className="mt-[3px] grid grid-cols-[44px_26px_26px_26px] grid-rows-3 gap-x-4 gap-y-px pl-[6px]">
          <ArrowButton label="Up" turn="rotate-0" className="col-start-2" />
          <button aria-label="Z up" className="col-start-4 border border-[#555] bg-white" />
          <ArrowButton label="Left" turn="-rotate-90" className="col-start-1 justify-self-end" />
          <ArrowButton label="Right" turn="rotate-90" className="col-start-3" />
          <button className="col-start-1 h-4 self-end justify-self-start rounded-xs border border-[#ddd] bg-white px-0.5 leading-3">Preview</button>
          <ArrowButton label="Down" turn="rotate-180" />
          <button aria-label="Z down" className="col-start-4 border border-[#555] bg-white" />
        </div>
        <div className="mt-1.5 flex h-4 items-center gap-0.5 pl-[9px]">
          <CheckBox id="fast" />
          <label htmlFor="fast" className="w-5">Fast</label>
          <span className="relative ml-px flex">
            <select aria-label="Speed" className="h-[15px] w-[46px] appearance-none rounded-xs border border-[#ddd] border-b-[#aaa] bg-white pl-px font-['Liberation_Mono',monospace] text-[9px] leading-3">
              <option>20mm/s</option>
              <option>50mm/s</option>
            </select>
            <svg width="7" height="5" viewBox="0 0 7 5" fill="none" className="pointer-events-none absolute top-[5px] right-[3px]">
              <path d="M.5 .5l3 3 3-3" stroke="#777" />
            </svg>
          </span>
          <span className="ml-5 flex items-center gap-0.5">
            <CheckBox id="step" />
            <label htmlFor="step">Step</label>
          </span>
        </div>
        <div className="mt-px flex h-4 items-center gap-0.5 pl-[9px]">
          <CheckBox id="jog" />
          <label htmlFor="jog" className="w-12">Jog Cut</label>
          <button aria-label="More" className="w-[34px] text-left font-bold text-[#33406e]">···</button>
          <span>PWM:</span>
        </div>

        <div className="mt-5 ml-[6px] grid auto-rows-[20px] grid-cols-3 gap-[3px]">
          <PanelButton label="Set Record" />
          <PanelButton label="Go Record" />
          <PanelButton label="">
            <Icon size={12}>
              <path d="M1 3h11v6H1z" fill="#4f86d6" stroke="#2f62a8" />
            </Icon>
          </PanelButton>
          <PanelButton label="Shutter"><Lamp /></PanelButton>
          <PanelButton label="Aiming"><Lamp /></PanelButton>
          <PanelButton label=""><Lamp /></PanelButton>
          <PanelButton label="Follow"><Lamp /></PanelButton>
          <PanelButton label="Puff"><Lamp /></PanelButton>
          <PanelButton label="" />
        </div>

        <h3 className="mt-[3px] ml-[6px] flex h-4 items-center gap-1 text-[9px]">
          NC Control <span className="h-px flex-1 bg-[#e2e2e2]" />
        </h3>
        <div className="mt-1 ml-[6px] grid auto-rows-[21px] grid-cols-3 gap-[3px]">
          <PanelButton label="Start*">
            <Icon size={12}>
              <path d="M3 1l6 5-6 5z" fill="#1f4f96" />
            </Icon>
          </PanelButton>
          <PanelButton label="Pause" disabled>
            <Icon size={12}>
              <path d="M2 2h3v8H2zM7 2h3v8H7z" fill="#a8a8a8" />
            </Icon>
          </PanelButton>
          <PanelButton label="">
            <Icon size={12}>
              <circle cx="6" cy="6" r="6" fill="#c9202b" />
              <path d="M4 4l4 4M8 4L4 8" stroke="#fff" strokeWidth="1.500" />
            </Icon>
          </PanelButton>
          <PanelButton label="Frame">
            <Icon size={12}>
              <path d="M.500 1.500h11v10H.5z" fill="#eceafa" stroke="#7d78b8" />
              <path d="M3 5h4V3l4 3.500L7 10V8H3z" fill="#5248b8" />
            </Icon>
          </PanelButton>
          <PanelButton label="Simu">
            <Icon size={12}>
              <path d="M3 2l5 4-5 4z" stroke="#2e5a32" />
            </Icon>
          </PanelButton>
          <PanelButton label="">
            <Icon size={12}>
              <path d="M3 2l5 4-5 4z" stroke="#3c4b8c" />
            </Icon>
          </PanelButton>
          <PanelButton label="Loop">
            <Icon size={12}>
              <path d="M4 2.500H1.500v7H5M8 9.500h2.500v-7H7" stroke="#2c8a3d" strokeWidth="1.400" />
              <path d="M4 0l3 2.500L4 5zM8 7L5 9.500 8 12z" fill="#2c8a3d" />
            </Icon>
          </PanelButton>
          <PanelButton label="Pt LOC" disabled>
            <Icon size={12}>
              <path d="M0 6h6M4 4l2 2-2 2M8.500 2v8M11 2v8" stroke="#999" />
            </Icon>
          </PanelButton>
          <PanelButton label="" disabled>
            <Icon size={12}>
              <path d="M1.500 2v8M4 2v8M6 2l5 4-5 4z" stroke="#999" />
            </Icon>
          </PanelButton>
          <PanelButton label="Back" disabled>
            <Icon size={12}>
              <path d="M6 1L1 6l5 5V8h1v3h1V1H7v3H6zM9 2h2v8H9z" fill="#b0b0b0" />
            </Icon>
          </PanelButton>
          <PanelButton label="Forward" disabled>
            <Icon size={12}>
              <path d="M6 1l5 5-5 5V8H5v3H4V1h1v3h1zM3 2H1v8h2z" fill="#b0b0b0" />
            </Icon>
          </PanelButton>
          <button className="rounded-xs border border-[#dcdcdc] border-b-[#bdbdbd] bg-white px-0.5 text-left">Re</button>
        </div>

        <ul className="mt-[9px] flex flex-col pl-[9px]">
          {options.map(({ label, on, value }, i) => (
            <li key={label} className="flex h-[13px] items-center gap-[3px] whitespace-nowrap">
              <CheckBox id={`option-${i}`} defaultChecked={on} />
              <label htmlFor={`option-${i}`}>{label}</label>
              {value && <span className="ml-7">{value}</span>}
            </li>
          ))}
        </ul>
        <p className="mt-2 ml-[5px] leading-4 whitespace-nowrap">Back/Forward distance/speed</p>
        <p className="mt-1 border-t border-[#ddd] pl-[7px] leading-4">Counter(Management)</p>
      </div>
    </aside>
  );
}

export default function App() {
  return (
    <div className="flex h-screen flex-col overflow-hidden bg-white font-['Noto_Sans',sans-serif] text-[#4a5568]">
      <TitleBar />
      <RibbonTabs />
      <Ribbon />
      <div className="flex min-h-0 flex-1">
        <NestPanel />
        <ToolBox />
        <Workspace />
        <LayerStrip />
        <ControlPanel />
      </div>
    </div>
  );
}
